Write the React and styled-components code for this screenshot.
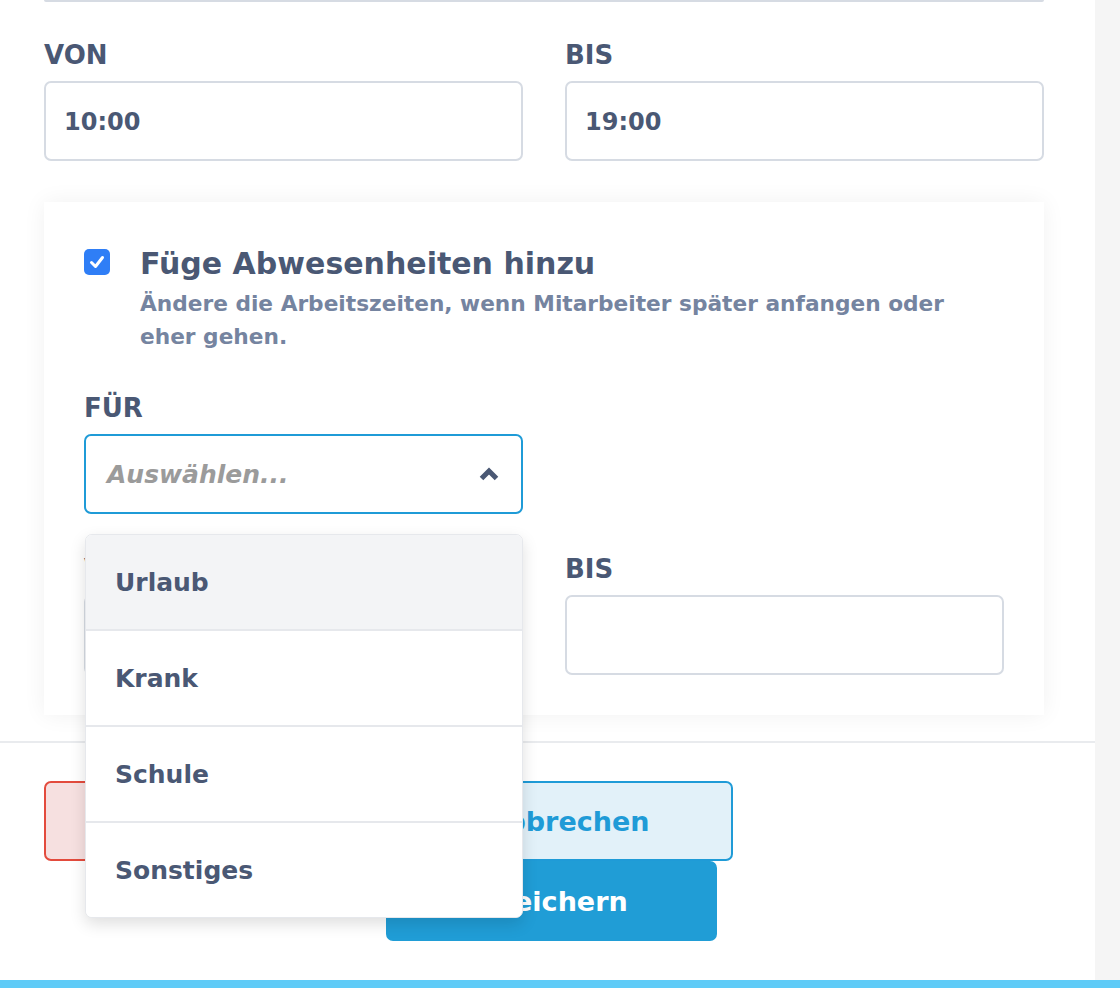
import React from "react";
import styled, { createGlobalStyle } from "styled-components";

const GlobalStyle = createGlobalStyle`
  * { box-sizing: border-box; }
  body {
    margin: 0;
    background: #fff;
    font-family: "DejaVu Sans", "Liberation Sans", sans-serif;
    color: #4a5874;
  }
`;

const options = ["Urlaub", "Krank", "Schule", "Sonstiges"];

const App = () => {
    return (
        <>
            <GlobalStyle />
            <Page>
                <Main>
                    <Content>
                        <PrevEdge />
                        <TimeGrid>
                            <Field>
                                <Label>VON</Label>
                                <Input>10:00</Input>
                            </Field>
                            <Field>
                                <Label>BIS</Label>
                                <Input>19:00</Input>
                            </Field>
                        </TimeGrid>

                        <Card>
                            <CheckRow>
                                <Checkbox>
                                    <svg width="18" height="18" viewBox="0 0 18 18">
                                        <polyline
                                            points="3.5,9.5 7.5,13.5 14.5,4.5"
                                            fill="none"
                                            stroke="#fff"
                                            strokeWidth="3"
                                            strokeLinecap="round"
                                            strokeLinejoin="round"
                                        />
                                    </svg>
                                </Checkbox>
                                <div>
                                    <Title>Füge Abwesenheiten hinzu</Title>
                                    <Hint>
                                        Ändere die Arbeitszeiten, wenn Mitarbeiter später anfangen oder
                                        eher gehen.
                                    </Hint>
                                </div>
                            </CheckRow>

                            <InnerGrid>
                                <Field>
                                    <Label>FÜR</Label>
                                    <SelectWrap>
                                        <Select>
                                            <Placeholder>Auswählen...</Placeholder>
                                            <svg width="20" height="16" viewBox="0 0 20 16">
                                                <polyline
                                                    points="2.5,12.5 10,5 17.5,12.5"
                                                    fill="none"
                                                    stroke="#4a5874"
                                                    strokeWidth="5"
                                                    strokeLinejoin="miter"
                                                />
                                            </svg>
                                        </Select>
                                        <Menu>
                                            {options.map((o, i) => (
                                                <MenuItem key={o} $active={i === 0}>
                                                    {o}
                                                </MenuItem>
                                            ))}
                                        </Menu>
                                    </SelectWrap>
                                </Field>
                            </InnerGrid>

                            <InnerGrid>
                                <Field>
                                    <Label>VON</Label>
                                    <Input />
                                </Field>
                                <Field>
                                    <Label>BIS</Label>
                                    <Input />
                                </Field>
                            </InnerGrid>
                        </Card>
                    </Content>

                    <Footer>
                        <Button $variant="danger">Löschen</Button>
                        <ActionStack>
                            <Button $variant="outline">Abbrechen</Button>
                            <Button $variant="primary" $shift>
                                Speichern
                            </Button>
                        </ActionStack>
                    </Footer>
                </Main>
                <Gutter />
            </Page>
            <BottomBar />
        </>
    );
};

export default App;

// ---------------- Styled Components ----------------
const Page = styled.div`
  display: flex;
  height: 980px;
`;

const Main = styled.main`
  width: 1095px;
  background: #fff;
  display: flex;
  flex-direction: column;
`;

const Gutter = styled.div`
  flex: 1;
  background: #f5f5f5;
`;

const BottomBar = styled.div`
  height: 8px;
  background: #5fcbf7;
`;

const Content = styled.div`
  padding: 0 51px 0 44px;
`;

const PrevEdge = styled.div`
  height: 2px;
  border-bottom: 2px solid #d6dbe3;
  border-radius: 0 0 6px 6px;
`;

const TimeGrid = styled.div`
  display: grid;
  grid-template-columns: 1fr 1fr;
  column-gap: 42px;
  margin-top: 37px;
`;

const InnerGrid = styled(TimeGrid)`
  margin-top: 39px;
`;

const Field = styled.div`
  display: flex;
  flex-direction: column;
`;

const Label = styled.label`
  font-size: 26px;
  line-height: 32px;
  font-weight: 700;
  color: #4a5874;
  margin-bottom: 10px;
`;

const Input = styled.div`
  height: 80px;
  border: 2px solid #d6dbe3;
  border-radius: 7px;
  background: #fff;
  display: flex;
  align-items: center;
  padding: 2px 18px 0;
  font-size: 24px;
  font-weight: 700;
  color: #4a5874;
`;

const Card = styled.section`
  margin-top: 41px;
  background: #fff;
  padding: 44px 40px 40px;
  box-shadow: 0 0 22px rgba(0, 0, 0, 0.06);
`;

const CheckRow = styled.div`
  display: flex;
  align-items: flex-start;
  gap: 30px;
`;

const Checkbox = styled.span`
  flex: none;
  width: 26px;
  height: 26px;
  margin-top: 3px;
  border-radius: 5px;
  background: #2f7ef6;
  display: flex;
  align-items: center;
  justify-content: center;
`;

const Title = styled.h2`
  margin: 0;
  font-size: 30px;
  line-height: 36px;
  font-weight: 700;
  color: #4a5874;
`;

const Hint = styled.p`
  margin: 5px 0 0;
  font-size: 21.7px;
  line-height: 33px;
  font-weight: 700;
  color: #7584a0;
`;

const SelectWrap = styled.div`
  position: relative;
`;

const Select = styled.div`
  height: 80px;
  border: 2px solid #1f9bd7;
  border-radius: 7px;
  display: flex;
  align-items: center;
  justify-content: space-between;
  padding: 0 22px 0 21px;
`;

const Placeholder = styled.span`
  font-size: 25px;
  font-style: italic;
  font-weight: 700;
  color: #9b9b9b;
`;

const Menu = styled.ul`
  position: absolute;
  z-index: 10;
  top: calc(100% + 20px);
  left: 1px;
  right: 0;
  margin: 0;
  padding: 0;
  list-style: none;
  background: #fff;
  border: 1px solid #e6e8ec;
  border-radius: 7px;
  overflow: hidden;
  box-shadow: 0 6px 16px rgba(0, 0, 0, 0.13);
`;

const MenuItem = styled.li`
  height: 96px;
  display: flex;
  align-items: center;
  padding-left: 29px;
  font-size: 25px;
  font-weight: 700;
  color: #4a5874;
  background: ${(p) => (p.$active ? "#f3f4f6" : "#fff")};
  border-bottom: 2px solid #e6e8ec;

  &:last-child {
    height: 94px;
    border-bottom: none;
  }
`;

const Footer = styled.div`
  margin-top: 26px;
  border-top: 2px solid #e9ebee;
  padding: 38px 44px 0;
  display: flex;
  align-items: flex-start;
  gap: 11px;
`;

const ActionStack = styled.div`
  display: flex;
  flex-direction: column;
  align-items: flex-end;
`;

const variants = {
    danger: { bg: "#f6e0e0", border: "#e34b3d", color: "#e34b3d" },
    outline: { bg: "#e2f1f9", border: "#1f9bd7", color: "#1f9bd7" },
    primary: { bg: "#209dd6", border: "#209dd6", color: "#fff" },
};

const Button = styled.button`
  width: 331px;
  height: 80px;
  border-radius: 7px;
  font-family: inherit;
  font-size: 27px;
  font-weight: 700;
  cursor: pointer;
  background: ${(p) => variants[p.$variant].bg};
  border: 2px solid ${(p) => variants[p.$variant].border};
  color: ${(p) => variants[p.$variant].color};
  margin-right: ${(p) => (p.$shift ? "16px" : "0")};
`;
